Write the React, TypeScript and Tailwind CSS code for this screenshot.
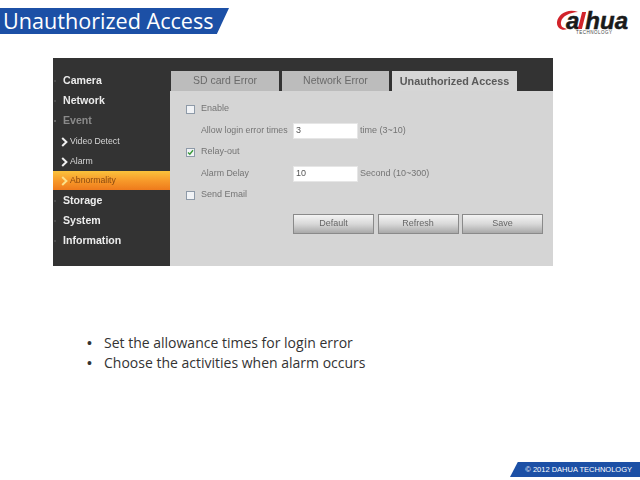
const sans = "font-['Liberation_Sans',Arial,sans-serif]";

function NavHead({ label, dim }: { label: string; dim?: boolean }) {
  return (
    <div className={`h-5 flex items-center text-[10.6px] font-bold ${dim ? "text-[#8a8a8a]" : "text-[#ececec]"}`}>
      <span className={`w-[2px] h-[2px] ml-[1px] mr-[7px] rounded-full ${dim ? "bg-[#777]" : "bg-[#555]"}`} />
      <span>{label}</span>
    </div>
  );
}

function Chevron({ color }: { color: string }) {
  return (
    <svg width="7" height="10" viewBox="0 0 7 10" className="shrink-0">
      <path d="M1.2 1 L5.4 5 L1.2 9" fill="none" stroke={color} strokeWidth="2" />
    </svg>
  );
}

function NavSub({ label }: { label: string }) {
  return (
    <div className="h-5 pt-[2px] flex items-center gap-[2px] pl-[8px] text-[8.7px] text-[#d8d8d8]">
      <Chevron color="#efefef" />
      <span>{label}</span>
    </div>
  );
}

function Tab({ label, active, width }: { label: string; active?: boolean; width: string }) {
  return (
    <div
      className={`${width} h-5 flex items-center justify-center ${
        active ? "bg-[#d6d6d6] text-[#5a5a5a] font-bold text-[10.8px]" : "bg-[#bcbcbc] text-[#6a6a6a] text-[10.5px]"
      }`}
    >
      {label}
    </div>
  );
}

function Check({ checked }: { checked?: boolean }) {
  return (
    <div className="w-[9px] h-[9px] shrink-0 border border-[#8e9aa8] bg-[#f1f3f6] flex items-center justify-center">
      {checked && (
        <svg width="7" height="7" viewBox="0 0 7 7">
          <path d="M1 3.5 L2.8 5.3 L6 1.3" fill="none" stroke="#3a9a3a" strokeWidth="1.4" />
        </svg>
      )}
    </div>
  );
}

function CheckRow({ label, checked, className }: { label: string; checked?: boolean; className: string }) {
  return (
    <div className={`flex items-center gap-[6px] h-[12px] pl-[16px] ${className}`}>
      <Check checked={checked} />
      <span>{label}</span>
    </div>
  );
}

function InputRow({ label, value, suffix, className }: { label: string; value: string; suffix: string; className: string }) {
  return (
    <div className={`flex items-center h-4 pl-[31px] whitespace-nowrap ${className}`}>
      <span className="w-[92px] text-[8.8px]">{label}</span>
      <div className="w-[65px] h-4 bg-white border border-[#e6e6e6] flex items-center pl-[2px] text-[#555]">{value}</div>
      <span className="ml-[2px]">{suffix}</span>
    </div>
  );
}

function Btn({ label }: { label: string }) {
  return (
    <div className="w-[81px] h-[20px] flex items-center justify-center border border-[#8a8a8a] bg-gradient-to-b from-[#f4f4f4] via-[#d8d8d8] to-[#a9a9a9] text-[#666]">
      {label}
    </div>
  );
}

export default function App() {
  return (
    <div className="w-[640px] h-[480px] bg-white overflow-hidden flex flex-col relative">
      <div className="flex items-start justify-between pt-2 h-[58px] shrink-0">
        <div className="w-[229px] h-[26px] bg-[#1c50a6] [clip-path:polygon(0_0,100%_0,94.7%_100%,0_100%)] pl-[3px] flex items-center text-white text-[21.6px] font-['Open_Sans',sans-serif] whitespace-nowrap leading-none">
          Unauthorized Access
        </div>
        <div className="w-[84px] mt-[3px] flex flex-col items-start">
          <div className="relative h-[19px] flex items-center">
            <svg width="30" height="22" viewBox="0 0 30 22" className="absolute left-0 top-[-1px]">
              <path d="M22 2 C12 -2 2 4 1 12 C0.5 19 7 21 11 19 C6 18 4.500 16 5 12 C6 6 14 2.500 22 2 Z" fill="#d2232a" />
            </svg>
            <span className="relative ml-[10px] flex items-center font-['Liberation_Sans',sans-serif] italic font-bold text-[24px] leading-[19px] text-[#1a1a1a] [-webkit-text-stroke:0.5px_#1a1a1a] whitespace-nowrap">
              a
              <span className="inline-block w-[4px] h-[17px] mx-[1px] bg-[#d2232a] -skew-x-[14deg]" />
              hua
            </span>
          </div>
          <div className="ml-[20px] mt-[1px] text-[4.5px] leading-none tracking-[0.5px] text-[#444] font-['Liberation_Sans',sans-serif] whitespace-nowrap">
            TECHNOLOGY
          </div>
        </div>
      </div>

      <div className={`ml-[53px] w-[500px] h-[208px] flex shrink-0 ${sans} blur-[0.4px]`}>
        <div className="w-[117px] bg-[#333333] pt-[13px] flex flex-col">
          <NavHead label="Camera" />
          <NavHead label="Network" />
          <NavHead label="Event" dim />
          <NavSub label="Video Detect" />
          <NavSub label="Alarm" />
          <div className="h-[19px] mb-[1px] pt-[1px] flex items-center gap-[2px] pl-[8px] text-[8.7px] text-[#8a4a10] bg-gradient-to-b from-[#f9c23c] via-[#f79a2a] to-[#ee7a1c]">
            <Chevron color="#fbe08a" />
            <span>Abnormality</span>
          </div>
          <NavHead label="Storage" />
          <NavHead label="System" />
          <NavHead label="Information" />
        </div>
        <div className="flex-1 bg-[#d5d5d5] flex flex-col">
          <div className="bg-[#333333] pt-[13px] pl-px flex gap-[3px]">
            <Tab label="SD card Error" width="w-[108px]" />
            <Tab label="Network Error" width="w-[107px]" />
            <Tab label="Unauthorized Access" width="w-[125px]" active />
          </div>
          <div className="flex flex-col text-[9px] text-[#747474]">
            <CheckRow label="Enable" className="mt-[12px]" />
            <InputRow label="Allow login error times" value="3" suffix="time (3~10)" className="mt-[8px]" />
            <CheckRow label="Relay-out" checked className="mt-[7px]" />
            <InputRow label="Alarm Delay" value="10" suffix="Second (10~300)" className="mt-[8px]" />
            <CheckRow label="Send Email" className="mt-[7px]" />
            <div className="flex gap-[3.5px] pl-[123px] mt-[13px]">
              <Btn label="Default" />
              <Btn label="Refresh" />
              <Btn label="Save" />
            </div>
          </div>
        </div>
      </div>

      <ul className="mt-[67px] ml-[87px] text-[14px] leading-[20px] text-[#333] font-['Open_Sans',sans-serif] flex flex-col">
        <li className="flex"><span className="w-[17px] font-['Liberation_Sans',sans-serif]">•</span>Set the allowance times for login error</li>
        <li className="flex"><span className="w-[17px] font-['Liberation_Sans',sans-serif]">•</span>Choose the activities when alarm occurs</li>
      </ul>

      <div className="mt-auto mb-[3px] self-end w-[130px] h-[15px] bg-[#1c50a6] [clip-path:polygon(6%_0,100%_0,100%_100%,0_100%)] flex items-center justify-end pr-[8px] text-[7.5px] text-white whitespace-nowrap font-['Liberation_Sans',sans-serif]">
        © 2012 DAHUA TECHNOLOGY
      </div>
    </div>
  );
}
